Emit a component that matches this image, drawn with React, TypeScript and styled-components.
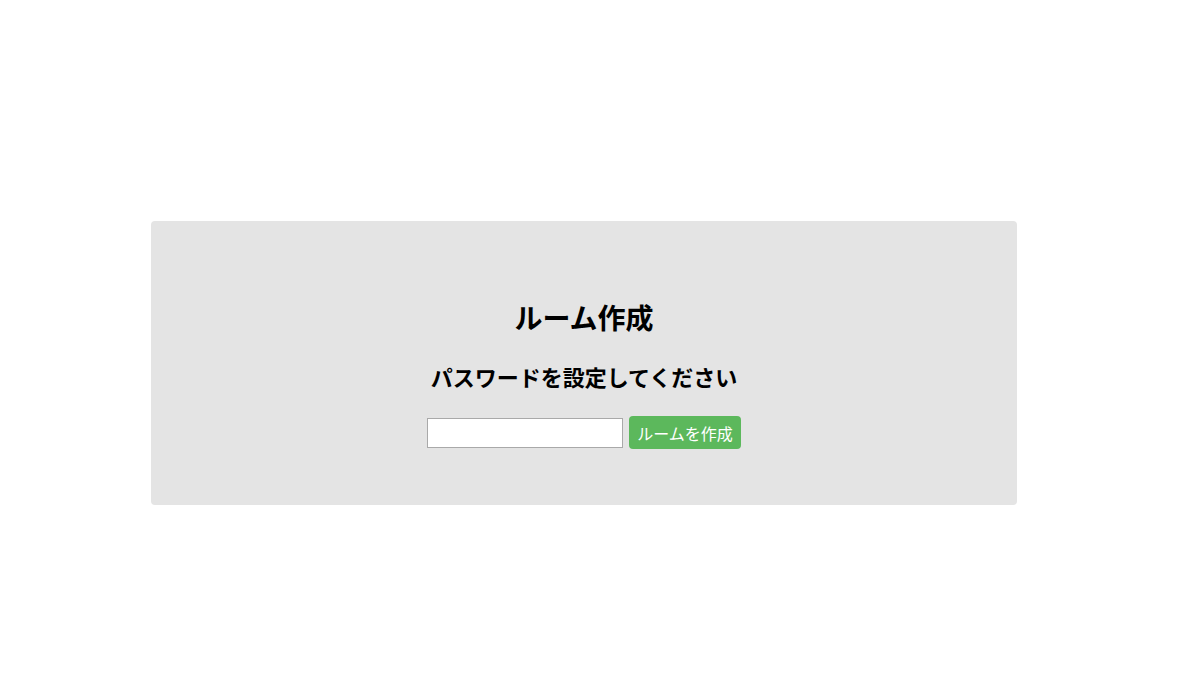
import styled, { createGlobalStyle } from "styled-components";

const GlobalStyle = createGlobalStyle`
  body {
    margin: 0;
    background: #fff;
    font-family: "Noto Sans CJK JP", "Noto Sans", sans-serif;
  }
`;

const Page = styled.div`
  padding: 221px 0 0 151px;
`;

const Panel = styled.div`
  width: 866px;
  height: 284px;
  box-sizing: border-box;
  background: #e4e4e4;
  border-radius: 4px;
  padding-top: 76px;
  display: flex;
  flex-direction: column;
  align-items: center;
`;

const Title = styled.h1`
  margin: 0;
  font-size: 28px;
  line-height: 40px;
  font-weight: bold;
  color: #000;
`;

const Subtitle = styled.h2`
  margin: 24px 0 0;
  font-size: 22px;
  line-height: 30px;
  font-weight: bold;
  color: #000;
`;

const Form = styled.form`
  display: flex;
  align-items: center;
  gap: 6px;
  margin-top: 25px;
`;

const PasswordInput = styled.input`
  width: 196px;
  height: 30px;
  box-sizing: border-box;
  border: 1px solid #a9a9a9;
  background: #fff;
  padding: 2px 4px;
  font-size: 14px;
  &:focus {
    outline: none;
  }
`;

const CreateButton = styled.button`
  height: 33px;
  padding: 0 8px;
  background: #5cb85c;
  color: #fff;
  border: none;
  border-radius: 4px;
  font-family: "Noto Sans CJK JP", sans-serif;
  font-size: 16px;
  cursor: pointer;
`;

export default function App() {
  return (
    <>
      <GlobalStyle />
      <Page>
        <Panel>
          <Title>ルーム作成</Title>
          <Subtitle>パスワードを設定してください</Subtitle>
          <Form onSubmit={(e) => e.preventDefault()}>
            <PasswordInput type="password" />
            <CreateButton type="submit">ルームを作成</CreateButton>
          </Form>
        </Panel>
      </Page>
    </>
  );
}
